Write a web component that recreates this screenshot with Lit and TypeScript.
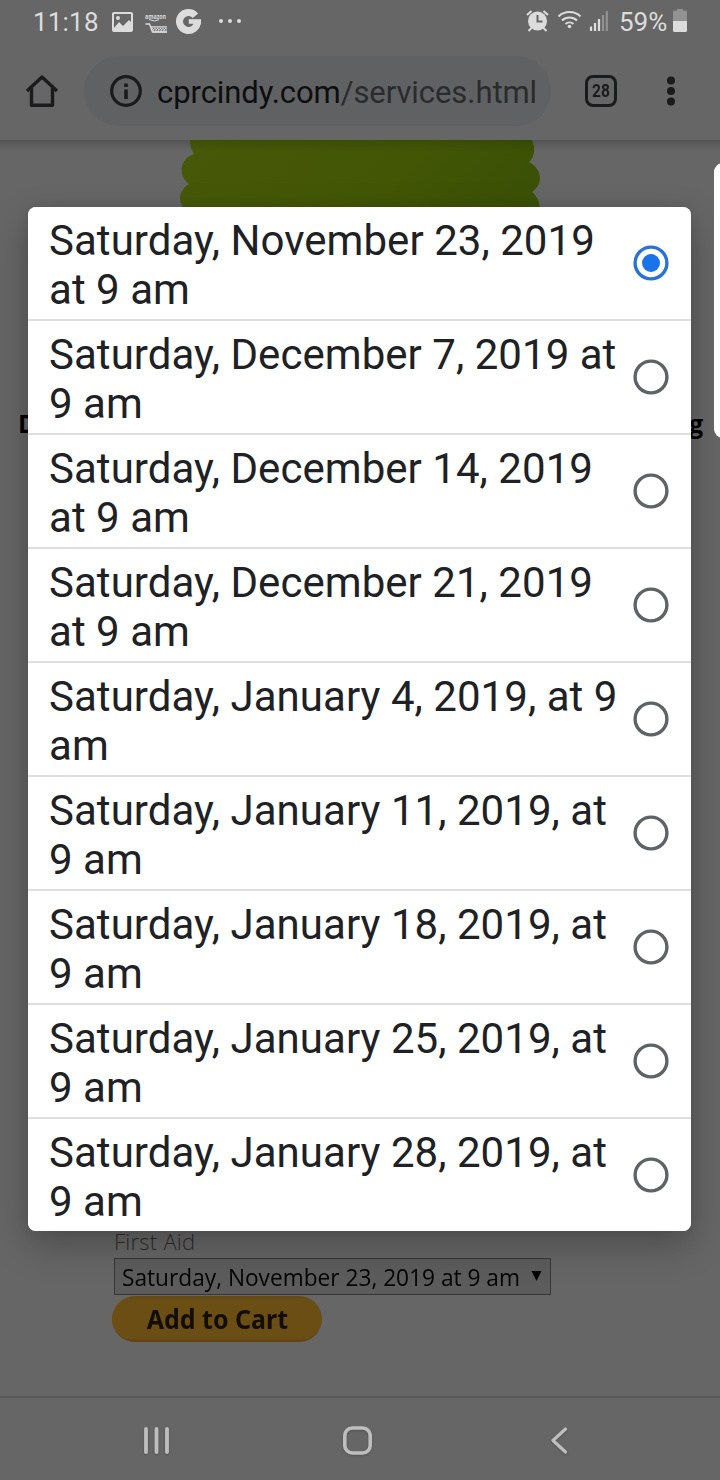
import { LitElement, html, css } from "lit";
import { customElement, property, state } from "lit/decorators.js";
import { classMap } from "lit/directives/class-map.js";

@customElement("status-bar")
class StatusBar extends LitElement {
  static styles = css`
    :host { display: flex; height: 44px; box-sizing: border-box; padding: 0 32px 0 33px; align-items: center; color: #dcdcdc; font: 26px/44px Roboto, sans-serif; }
    svg { display: block; flex: none; }
    .clock { width: 79px; letter-spacing: 0.2px; }
    .left { width: 132px; }
    .right { margin-left: auto; width: 84px; }
    .percent { width: 63px; padding-left: 9px; box-sizing: border-box; letter-spacing: 0; }
  `;
  render() {
    return html`
      <span class="clock">11:18</span>
      <svg class="left" width="132" height="44" viewBox="112 0 132 44" fill="#dcdcdc">
        <path fill-rule="evenodd" d="M114 12h17a2 2 0 0 1 2 2v16a2 2 0 0 1-2 2h-17a2 2 0 0 1-2-2V14a2 2 0 0 1 2-2zM114 14v14l5-6 4 4 6-6 2 2v-8zM118 16a2 2 0 1 1 0 4 2 2 0 0 1 0-4z"/>
        <text x="145" y="19" font-family="Open Sans" font-weight="700" font-size="6.4" textLength="21" lengthAdjust="spacingAndGlyphs">amazon</text>
        <path d="M149 19.500q6 2.800 10 .2" fill="none" stroke="#dcdcdc" stroke-width="1"/>
        <path d="M145.500 24h4l3 8h14.500" fill="none" stroke="#dcdcdc" stroke-width="1.400"/>
        <path d="M151 26.800h16M152.500 32h14" stroke="#dcdcdc" stroke-width="1.200"/>
        <path d="M151.500 28.300h15.500M152.200 30.900h14.500" stroke="#dcdcdc" stroke-width="1.300" stroke-dasharray="1.500 1.200"/>
        <path d="M152.800 29.600h14" stroke="#dcdcdc" stroke-width="1.300" stroke-dasharray="1.500 1.200"/>
        <path d="M195.400 15.700A9 9 0 1 0 197.500 21.500" fill="none" stroke="#dcdcdc" stroke-width="7"/>
        <path d="M188.800 19.200h12.200v4.600h-12.200z"/>
        <circle cx="221" cy="21" r="2"/><circle cx="230" cy="21" r="2"/><circle cx="239" cy="21" r="2"/>
      </svg>
      <svg class="right" width="84" height="44" viewBox="526 0 84 44" fill="none" stroke="#dcdcdc">
        <circle cx="537.500" cy="21" r="9.500" fill="#dcdcdc" stroke="none"/>
        <path d="M527 15l4.500-4M548 15l-4.500-4M532 27.500l-3.500 3.500M543 27.500l3.500 3.500" stroke-width="2"/>
        <path d="M537.500 15v6.500h5" stroke="#666" stroke-width="2"/>
        <path d="M558.500 16.500a16 16 0 0 1 22 0M562 20.500a11 11 0 0 1 15 0M565.500 24a6 6 0 0 1 8 0" stroke-width="2"/>
        <circle cx="569.500" cy="26.500" r="1.800" fill="#dcdcdc" stroke="none"/>
        <path d="M591 31v-4.500M595 31v-8M599 31V19" stroke-width="2.200"/>
        <path d="M603 31V15M606.800 31V11" stroke="#929292" stroke-width="2.200"/>
      </svg>
      <span class="percent">59%</span>
      <svg width="15" height="44" viewBox="673 0 15 44">
        <path d="M673 12q0-1.500 1.500-1.500h2.500V9h6v1.500h2.500q1.500 0 1.500 1.500V21h-14z" fill="#929292"/>
        <path d="M673 21h14v9.500q0 1.500-1.500 1.500h-11q-1.500 0-1.500-1.500z" fill="#dcdcdc"/>
      </svg>
    `;
  }
}

@customElement("browser-toolbar")
class BrowserToolbar extends LitElement {
  static styles = css`
    :host { display: flex; height: 96px; align-items: center; box-sizing: border-box; padding: 0 33px 2px 24px; font-family: Roboto, sans-serif; }
    svg { display: block; flex: none; }
    .omnibox { display: flex; align-items: center; width: 467px; height: 70px; margin-left: 25px; padding-left: 26px; box-sizing: border-box; border-radius: 35px; background: #606163; }
    .url { width: 378px; margin-left: 15px; overflow: hidden; white-space: nowrap; font-size: 31px; letter-spacing: -0.07px; line-height: 44px; color: #2a2b2c; padding-top: 4px; }
    .host { color: #0d0e0f; }
    .tabs { width: 32px; height: 32px; margin-left: 34px; box-sizing: border-box; border: 3.500px solid #1a1b1c; border-radius: 8px; display: flex; justify-content: center; font: 700 19px/26px Roboto, sans-serif; color: #1a1b1c; }
    .num { transform: scaleX(.82); }
    .more { margin-left: auto; }
  `;
  render() {
    return html`
      <svg width="35" height="34" viewBox="24 74 35 34" fill="none" stroke="#1a1b1c" stroke-width="3.400" stroke-linejoin="round"><path d="M27 91l15-14 15 14M31.500 88v17.200h21V88"/></svg>
      <div class="omnibox">
        <svg width="32" height="32" viewBox="0 0 32 32"><circle cx="16" cy="16" r="14.300" fill="none" stroke="#1a1b1c" stroke-width="3.200"/><path d="M14.200 8.500h3.600v3.600h-3.600zM14.200 14.500h3.600v9.500h-3.600z" fill="#1a1b1c"/></svg>
        <div class="url"><span class="host">cprcindy.com</span>/services.html</div>
      </div>
      <div class="tabs"><span class="num">28</span></div>
      <svg class="more" width="32" height="34" viewBox="655 74 32 34" fill="#1a1b1c"><circle cx="671" cy="80.500" r="4"/><circle cx="671" cy="91" r="4"/><circle cx="671" cy="101.500" r="4"/></svg>
    `;
  }
}

@customElement("page-content")
class PageContent extends LitElement {
  static styles = css`
    :host { display: flex; flex-direction: column; height: 1256px; overflow: hidden; font-family: "Open Sans", sans-serif; background: linear-gradient(#5f5f5f, #666 10px); }
    .banner { display: block; width: 720px; height: 120px; }
    .heading { display: flex; justify-content: space-between; height: 40px; margin-top: 143px; padding: 0 17px 0 18px; font-size: 25px; line-height: 40px; font-weight: 700; color: #040404; }
    .cart { display: flex; flex-direction: column; align-items: flex-start; margin-top: 787px; padding-left: 112px; }
    .label { margin-left: 2px; height: 28px; font-size: 22px; letter-spacing: 0.25px; line-height: 22px; font-weight: 300; color: #2c2c2c; }
    .select { display: flex; align-items: center; width: 437px; height: 37px; box-sizing: border-box; margin-left: 2px; padding: 0 9px 0 7px; border: 1px solid #373737; color: #050505; font: 24px/35px "Open Sans", sans-serif; background: #5c5c5c; white-space: nowrap; }
    .value { width: 409px; flex: none; transform: scaleX(.945); transform-origin: 0 50%; }
    .arrow { flex: none; display: block; }
    .add { width: 210px; height: 46px; margin-top: 1px; border-radius: 23px; background: linear-gradient(#614919, #6b4e14 5px, #6b4e14 42px, #61430f); box-sizing: border-box; border-bottom: 1px solid #614316; display: flex; justify-content: center; font: 700 27px/46px "Noto Sans", sans-serif; color: #120d05; }
    .caption { transform: scaleX(.925); white-space: nowrap; }
  `;
  render() {
    return html`
      <svg class="banner" viewBox="0 140 720 120">
        <defs><linearGradient id="g" x1="0" x2="1" y1="0" y2=".25"><stop stop-color="#475909"/><stop offset=".65" stop-color="#435606"/><stop offset="1" stop-color="#3b5105"/></linearGradient>
        <linearGradient id="s" x2="0" y2="1"><stop stop-opacity=".12"/><stop offset="1" stop-opacity="0"/></linearGradient></defs>
        <path fill="url(#g)" d="M190 140Q190 149 194 154C179 159 178 176 189 184C179 190 178 200 183 207V240H540V207Q538 196 532 192C544 184 542 169 529 162Q535 157 534 146L532 140z"/>
        <path fill="url(#s)" d="M0 140h720v12H0z"/>
      </svg>
      <div class="heading"><span>D</span><span>g</span></div>
      <div class="cart">
        <div class="label">First Aid</div>
        <div class="select"><span class="value">Saturday, November 23, 2019 at 9 am</span>
          <svg class="arrow" width="11" height="12" viewBox="0 0 11 12"><path d="M.5 0h10L5.500 10z" fill="#050505"/></svg></div>
        <div class="add"><span class="caption">Add to Cart</span></div>
      </div>
    `;
  }
}

@customElement("navigation-bar")
class NavigationBar extends LitElement {
  static styles = css`
    :host { display: block; height: 84px; box-sizing: border-box; border-top: 2px solid #5a5a5a; }
    svg { display: block; filter: drop-shadow(0 1px 1px rgba(0,0,0,.2)); }
  `;
  render() {
    return html`<svg width="720" height="82" viewBox="0 1398 720 82" fill="none" stroke="#bebebe" stroke-width="3.800" stroke-linecap="round" stroke-linejoin="round">
      <path d="M146 1429v23M156.500 1429v23M167 1429v23"/>
      <rect x="344.800" y="1428" width="25.400" height="25" rx="7.500" stroke-width="3.600"/>
      <path d="M565.500 1429L553 1440.500 565.500 1452" stroke-width="3.200"/>
    </svg>`;
  }
}

@customElement("option-row")
class OptionRow extends LitElement {
  @property() label = "";
  @property({ type: Boolean }) selected = false;
  static styles = css`
    :host { display: flex; height: 112px; box-sizing: border-box; padding: 9px 22px 5px 21px; align-items: flex-start; justify-content: space-between; color: #202124; }
    .label { width: 574px; font: 42px/49px Roboto, sans-serif; letter-spacing: 0.04px; white-space: pre; }
    .radio { flex: none; display: block; margin-top: 29px; fill: none; stroke: #5f6368; stroke-width: 3.4; }
    .on { stroke: #2a73d2; }
    .dot { fill: #1a73e8; stroke: none; }
  `;
  render() {
    return html`<span class="label">${this.label}</span>
      <svg class=${classMap({ radio: true, on: this.selected })} width="36" height="36" viewBox="0 0 36 36">
        <circle cx="18" cy="18" r="15.900"></circle>
        <circle class="dot" cx="18" cy="18" r=${this.selected ? 9 : 0}></circle>
      </svg>`;
  }
}

@customElement("app-root")
class AppRoot extends LitElement {
  @state() private chosen = 0;
  private options = [
    "Saturday, November 23, 2019\nat 9 am",
    "Saturday, December 7, 2019 at\n9 am",
    "Saturday, December 14, 2019\nat 9 am",
    "Saturday, December 21, 2019\nat 9 am",
    "Saturday, January 4, 2019, at 9\nam",
    "Saturday, January 11, 2019, at\n9 am",
    "Saturday, January 18, 2019, at\n9 am",
    "Saturday, January 25, 2019, at\n9 am",
    "Saturday, January 28, 2019, at\n9 am",
  ];
  static styles = css`
    :host { display: block; position: relative; width: 720px; height: 1480px; overflow: hidden; background: #666; }
    .dialog { position: absolute; left: 28px; top: 207px; width: 663px; height: 1024px; display: flex; flex-direction: column; gap: 2px; overflow: hidden; border-radius: 8px; background: #dedede; box-shadow: 0 14px 36px rgba(0,0,0,.26), 0 0 12px rgba(0,0,0,.08); }
    option-row { background: #fff; }
    .edge { position: absolute; left: 713.500px; top: 163px; width: 20px; height: 275px; border-radius: 9px; background: #fff; }
  `;
  render() {
    return html`
      <status-bar></status-bar>
      <browser-toolbar></browser-toolbar>
      <page-content></page-content>
      <navigation-bar></navigation-bar>
      <div class="dialog">
        ${this.options.map((o, i) => html`<option-row .label=${o} .selected=${i === this.chosen} @click=${() => (this.chosen = i)}></option-row>`)}
      </div>
      <div class="edge"></div>
    `;
  }
}
